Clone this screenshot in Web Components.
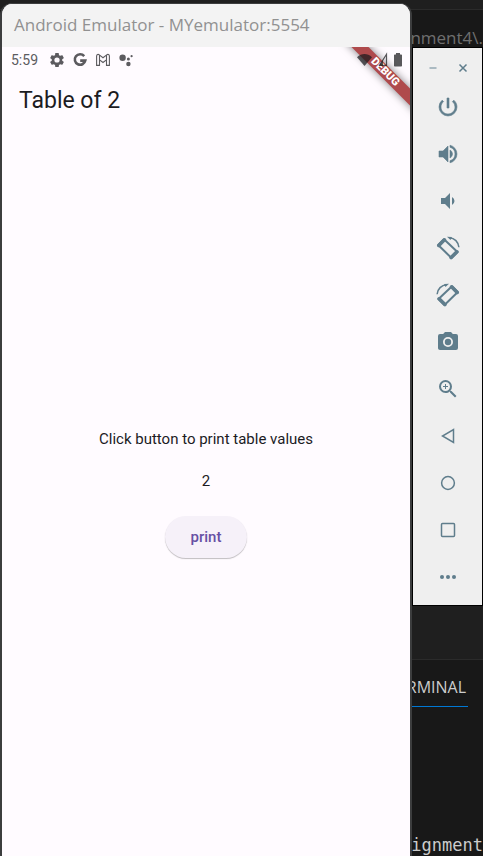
<!DOCTYPE html>
<html lang="en">
<head>
<meta charset="utf-8">
<meta name="viewport" content="width=device-width, initial-scale=1">
<title>Android Emulator</title>
<style>
  html, body { margin: 0; height: 100%; background: #181818; }
  body { overflow: hidden; }
</style>
</head>
<body>
<desktop-view>
  <code-editor slot="background"></code-editor>
  <emulator-window caption="Android Emulator - MYemulator:5554">
    <status-bar slot="status" time="5:59"></status-bar>
    <table-app heading="Table of 2" prompt="Click button to print table values" value="2"></table-app>
    <debug-ribbon slot="ribbon"></debug-ribbon>
  </emulator-window>
  <emulator-toolbar></emulator-toolbar>
</desktop-view>

<script>
const define = (name, html, after) => customElements.define(name, class extends HTMLElement {
  connectedCallback() {
    if (this.shadowRoot) return;
    const t = document.createElement('template');
    t.innerHTML = html;
    this.attachShadow({ mode: 'open' }).append(t.content.cloneNode(true));
    if (after) after(this, this.shadowRoot);
  }
});

define('desktop-view', `
  <style>
    :host { display: flex; align-items: flex-start; position: relative; box-sizing: border-box; height: 100vh; padding: 3px 0 0 0; overflow: hidden; }
    ::slotted(emulator-window) { flex: 1; align-self: stretch; position: relative; }
    ::slotted(emulator-toolbar) { flex: none; margin-top: 44px; position: relative; }
    ::slotted(code-editor) { position: absolute; inset: 0; }
  </style>
  <slot name="background"></slot><slot></slot>`);

define('code-editor', `
  <style>
    :host { display: flex; flex-direction: column; background: #181818; color: #ccc; text-align: right; white-space: nowrap; font-family: "Open Sans", "Noto Sans", sans-serif; }
    .tabs { height: 9px; background: #1f1f1f; border-bottom: 1px solid #2b2b2b; }
    .path { flex: none; height: 56px; line-height: 56px; font-size: 17px; color: #6f6f6f; }
    .code { flex: 1; background: #1f1f1f; }
    .panel { flex: none; height: 196px; border-top: 1px solid #2b2b2b; display: flex; flex-direction: column; align-items: flex-end; justify-content: space-between; }
    .tab { margin: 8px 15px 0 0; padding: 0 2px 0 20px; height: 38px; line-height: 38px; font-size: 16px; border-bottom: 1px solid #0078d4; }
    .line { font: 17px/22px "DejaVu Sans Mono", "Liberation Mono", monospace; }
  </style>
  <div class="tabs"></div>
  <div class="path">nment4\\.</div>
  <div class="code"></div>
  <div class="panel"><div class="tab">RMINAL</div><div class="line">ignment</div></div>`);

define('emulator-window', `
  <style>
    :host { display: flex; flex-direction: column; box-sizing: border-box; border: solid #3c3d3e; border-width: 1px 2px 0 2px; border-radius: 12px 12px 0 0; overflow: hidden; background: #fffbff; }
    header { flex: none; height: 43px; line-height: 42px; padding-left: 12px; background: #f3f3f3; color: #919191; font-family: "Open Sans", "Noto Sans", sans-serif; font-size: 17px; white-space: nowrap; }
    .screen { flex: 1; display: flex; flex-direction: column; position: relative; overflow: hidden; }
    ::slotted(table-app) { flex: 1; }
  </style>
  <header></header>
  <div class="screen"><slot name="ribbon"></slot><slot name="status"></slot><slot></slot></div>`,
  (el, r) => r.querySelector('header').textContent = el.getAttribute('caption'));

define('status-bar', `
  <style>
    :host { display: flex; align-items: center; height: 26px; padding: 0 7px 0 9px; color: #5c5b5f; font: 14px/26px Roboto, sans-serif; position: relative; }
    .time { margin-right: 11px; }
    .left { display: flex; gap: 7px; flex: 1; }
    .right { display: flex; gap: 5px; color: rgba(25,25,28,.72); }
    svg { display: block; height: 16px; }
  </style>
  <span class="time"></span>
  <div class="left">
    <svg width="16" viewBox="1 1 22 22" fill="currentColor"><path d="M19.14 12.94c.04-.3.06-.61.06-.94 0-.32-.02-.64-.07-.94l2.03-1.58a.49.49 0 0 0 .12-.61l-1.92-3.32a.49.49 0 0 0-.59-.22l-2.39.96c-.5-.38-1.03-.7-1.62-.94l-.36-2.54a.48.48 0 0 0-.48-.41h-3.84c-.24 0-.43.17-.47.41l-.36 2.54c-.59.24-1.13.57-1.62.94l-2.39-.96a.48.48 0 0 0-.59.22L2.74 8.87c-.12.21-.08.47.12.61l2.03 1.58c-.05.3-.09.63-.09.94s.02.64.07.94l-2.03 1.58a.49.49 0 0 0-.12.61l1.92 3.32c.12.22.37.29.59.22l2.39-.96c.5.38 1.03.7 1.62.94l.36 2.54c.05.24.24.41.48.41h3.84c.24 0 .44-.17.47-.41l.36-2.54c.59-.24 1.13-.56 1.62-.94l2.39.96c.22.08.47 0 .59-.22l1.92-3.32a.49.49 0 0 0-.12-.61zM12 15.6a3.6 3.6 0 1 1 0-7.2 3.6 3.6 0 0 1 0 7.2z"/></svg>
    <svg width="16" viewBox="0 0 16 16" fill="none" stroke="currentColor" stroke-width="2.6"><path d="M12.2 4.1A5.3 5.3 0 1 0 13.3 8.6H8.2"/></svg>
    <svg width="16" viewBox="0 0 16 16" fill="none" stroke="currentColor" stroke-width="1.1"><path d="M1.6 13.4V4.2C1.6 2.4 3.2 2 4.3 2.9L8 5.8l3.700-2.900C12.800 2 14.400 2.400 14.400 4.200v9.200h-2.900V7.800L8 10.500 4.500 7.800v5.600zM4.500 7.800V3.200M11.500 7.800V3.200"/></svg>
    <svg width="16" viewBox="0 0 16 16" fill="currentColor"><circle cx="4.600" cy="5.800" r="3.200"/><circle cx="10.400" cy="7" r="1.500"/><circle cx="10.400" cy="12" r="2.200"/><circle cx="13.600" cy="4.200" r="1.100"/></svg>
  </div>
  <div class="right">
    <svg width="16" viewBox="0 0 16 16" fill="currentColor"><path d="M0 5.200C4.500 .8 10.500 .8 15 5.200L7.500 14z"/></svg>
    <svg width="10" viewBox="4.500 0 10 16"><path d="M13 2.300V13.400H6z" fill="none" stroke="currentColor" stroke-width="1.200"/><path d="M9.500 8.500V13.500H5.500z" fill="currentColor"/></svg>
    <svg width="10" viewBox="0 0 10 16" fill="currentColor"><path d="M3 1h4v1.500h1.200q.8 0 .8.800v10.400q0 .8-.8.800H1.800q-.8 0-.8-.8V3.300q0-.8.8-.8H3z"/></svg>
  </div>`,
  (el, r) => r.querySelector('.time').textContent = el.getAttribute('time'));

define('debug-ribbon', `
  <style>
    :host { position: absolute; top: 0; right: 0; width: 72px; height: 72px; overflow: hidden; }
    div { position: absolute; top: 19px; right: -25px; width: 100px; height: 12px; transform: rotate(45deg); background: #af4a4c; box-shadow: 0 0 8px rgba(0,0,0,.5); color: #fff; font: 900 11px/12px Roboto, sans-serif; text-align: center; }
  </style>
  <div>DEBUG</div>`);

define('table-app', `
  <style>
    :host { display: flex; flex-direction: column; color: #1c1b1f; font: 15px/20px Roboto, sans-serif; }
    h1 { margin: 0; padding-left: 17px; height: 56px; line-height: 56px; font-size: 23px; font-weight: 400; }
    main { flex: 1; display: flex; flex-direction: column; align-items: center; padding-top: 300px; gap: 22px; }
    p { margin: 0; }
    button { margin-top: 3px; border: 0; border-radius: 21px; width: 82px; height: 42px; background: #f6f1f9; color: #6750a4; font: 500 15px/20px Roboto, sans-serif; box-shadow: 0 1px 1px rgba(0,0,0,.25); }
  </style>
  <h1></h1>
  <main><p class="prompt"></p><p class="value"></p><button type="button">print</button></main>`,
  (el, r) => {
    r.querySelector('h1').textContent = el.getAttribute('heading');
    r.querySelector('.prompt').textContent = el.getAttribute('prompt');
    r.querySelector('.value').textContent = el.getAttribute('value');
  });

const rotate = '<path d="M8 3.200 2.200 9 15.500 22 21.500 16z" fill="none" stroke="currentColor" stroke-width="2" stroke-linejoin="round"/><path d="M8.400 3.800 2.800 9.400M15.100 21.600 20.900 15.800" stroke="currentColor" stroke-width="3.600" stroke-linecap="round"/><path d="M13.500 1.700C18.500 2 22.500 6 22.900 11.300" fill="none" stroke="currentColor" stroke-width="1.500"/><path d="M11 .800l5 .200-1.500 3z" fill="currentColor"/>';
const tools = [
  ['Power', '<path fill="currentColor" d="M13 3h-2v10h2V3zm4.830 2.170l-1.420 1.420A6.920 6.920 0 0 1 19 12c0 3.870-3.130 7-7 7s-7-3.130-7-7c0-2.200 1.020-4.160 2.580-5.420L6.170 5.170A8.930 8.930 0 0 0 3 12a9 9 0 0 0 18 0c0-2.740-1.230-5.180-3.170-6.830z" stroke="currentColor" stroke-width=".6"/>'],
  ['Volume up', '<path fill="currentColor" stroke="currentColor" stroke-width=".6" d="M3 9v6h4l5 5V4L7 9H3zm13.500 3A4.500 4.500 0 0 0 14 7.970v8.050A4.470 4.470 0 0 0 16.500 12zM14 3.230v2.060a7 7 0 0 1 0 13.420v2.060a9 9 0 0 0 0-17.540z"/>'],
  ['Volume down', '<path fill="currentColor" d="M18.500 12A4.500 4.500 0 0 0 16 7.970v8.050A4.470 4.470 0 0 0 18.500 12zM5 9v6h4l5 5V4L9 9H5z"/>'],
  ['Rotate left', rotate],
  ['Rotate right', '<g transform="matrix(-1 0 0 1 24 0)">' + rotate + '</g>'],
  ['Take screenshot', '<path fill="currentColor" fill-rule="evenodd" d="M9 2 7.170 4H4a2 2 0 0 0-2 2v12c0 1.100.9 2 2 2h16a2 2 0 0 0 2-2V6a2 2 0 0 0-2-2h-3.170L15 2zM12 17a5 5 0 1 1 0-10 5 5 0 0 1 0 10zM12 15.200a3.200 3.200 0 1 0 0-6.400 3.200 3.200 0 0 0 0 6.400z"/>'],
  ['Zoom', '<path fill="currentColor" d="M15.500 14h-.79l-.28-.27A6.470 6.470 0 0 0 16 9.500 6.500 6.500 0 1 0 9.500 16c1.610 0 3.090-.59 4.230-1.570l.27.28v.79l5 4.990L20.490 19l-4.990-5zm-6 0C7.010 14 5 11.990 5 9.500S7.010 5 9.500 5 14 7.010 14 9.500 11.990 14 9.500 14zm2.500-4h-2v2H9v-2H7V9h2V7h1v2h2v1z"/>'],
  ['Back', '<path d="M17.500 5.500v13L6.500 12z" fill="none" stroke="currentColor" stroke-width="1.500"/>'],
  ['Home', '<circle cx="12" cy="12" r="6.400" fill="none" stroke="currentColor" stroke-width="1.500"/>'],
  ['Overview', '<rect x="5.500" y="5.500" width="13" height="13" rx="1" fill="none" stroke="currentColor" stroke-width="1.500"/>'],
  ['More', '<circle cx="6" cy="12" r="2" fill="currentColor"/><circle cx="12" cy="12" r="2" fill="currentColor"/><circle cx="18" cy="12" r="2" fill="currentColor"/>']
];

define('tool-button', `
  <style>
    :host { display: block; color: #5f7d8c; }
    button { display: flex; align-items: center; justify-content: center; width: 100%; height: 100%; margin: 0; padding: 0; border: 0; background: none; color: inherit; }
    svg { display: block; width: 24px; height: 24px; }
  </style>
  <button type="button"><svg viewBox="0 0 24 24"></svg></button>`,
  (el, r) => {
    r.querySelector('button').setAttribute('aria-label', el.getAttribute('label'));
    r.querySelector('svg').innerHTML = el.glyph;
  });

define('emulator-toolbar', `
  <style>
    :host { display: flex; flex-direction: column; box-sizing: border-box; width: 71px; padding: 4px 0 5px; background: #efefef; border: 1px solid #000; }
    .controls { display: flex; justify-content: center; height: 31px; }
    .controls tool-button { width: 30px; }
    .tools tool-button { height: 47px; }
  </style>
  <div class="controls"></div><div class="tools"></div>`,
  (el, r) => {
    const add = (box, label, glyph) => {
      const b = document.createElement('tool-button');
      b.setAttribute('label', label);
      b.glyph = glyph;
      r.querySelector(box).append(b);
    };
    add('.controls', 'Minimize', '<path d="M8.500 12h7" stroke="#9aadb7" stroke-width="1.600"/>');
    add('.controls', 'Close', '<path d="M8.500 8.500l7 7m0-7-7 7" stroke="currentColor" stroke-width="1.500"/>');
    for (const [label, glyph] of tools) add('.tools', label, glyph);
  });
</script>
</body>
</html>
